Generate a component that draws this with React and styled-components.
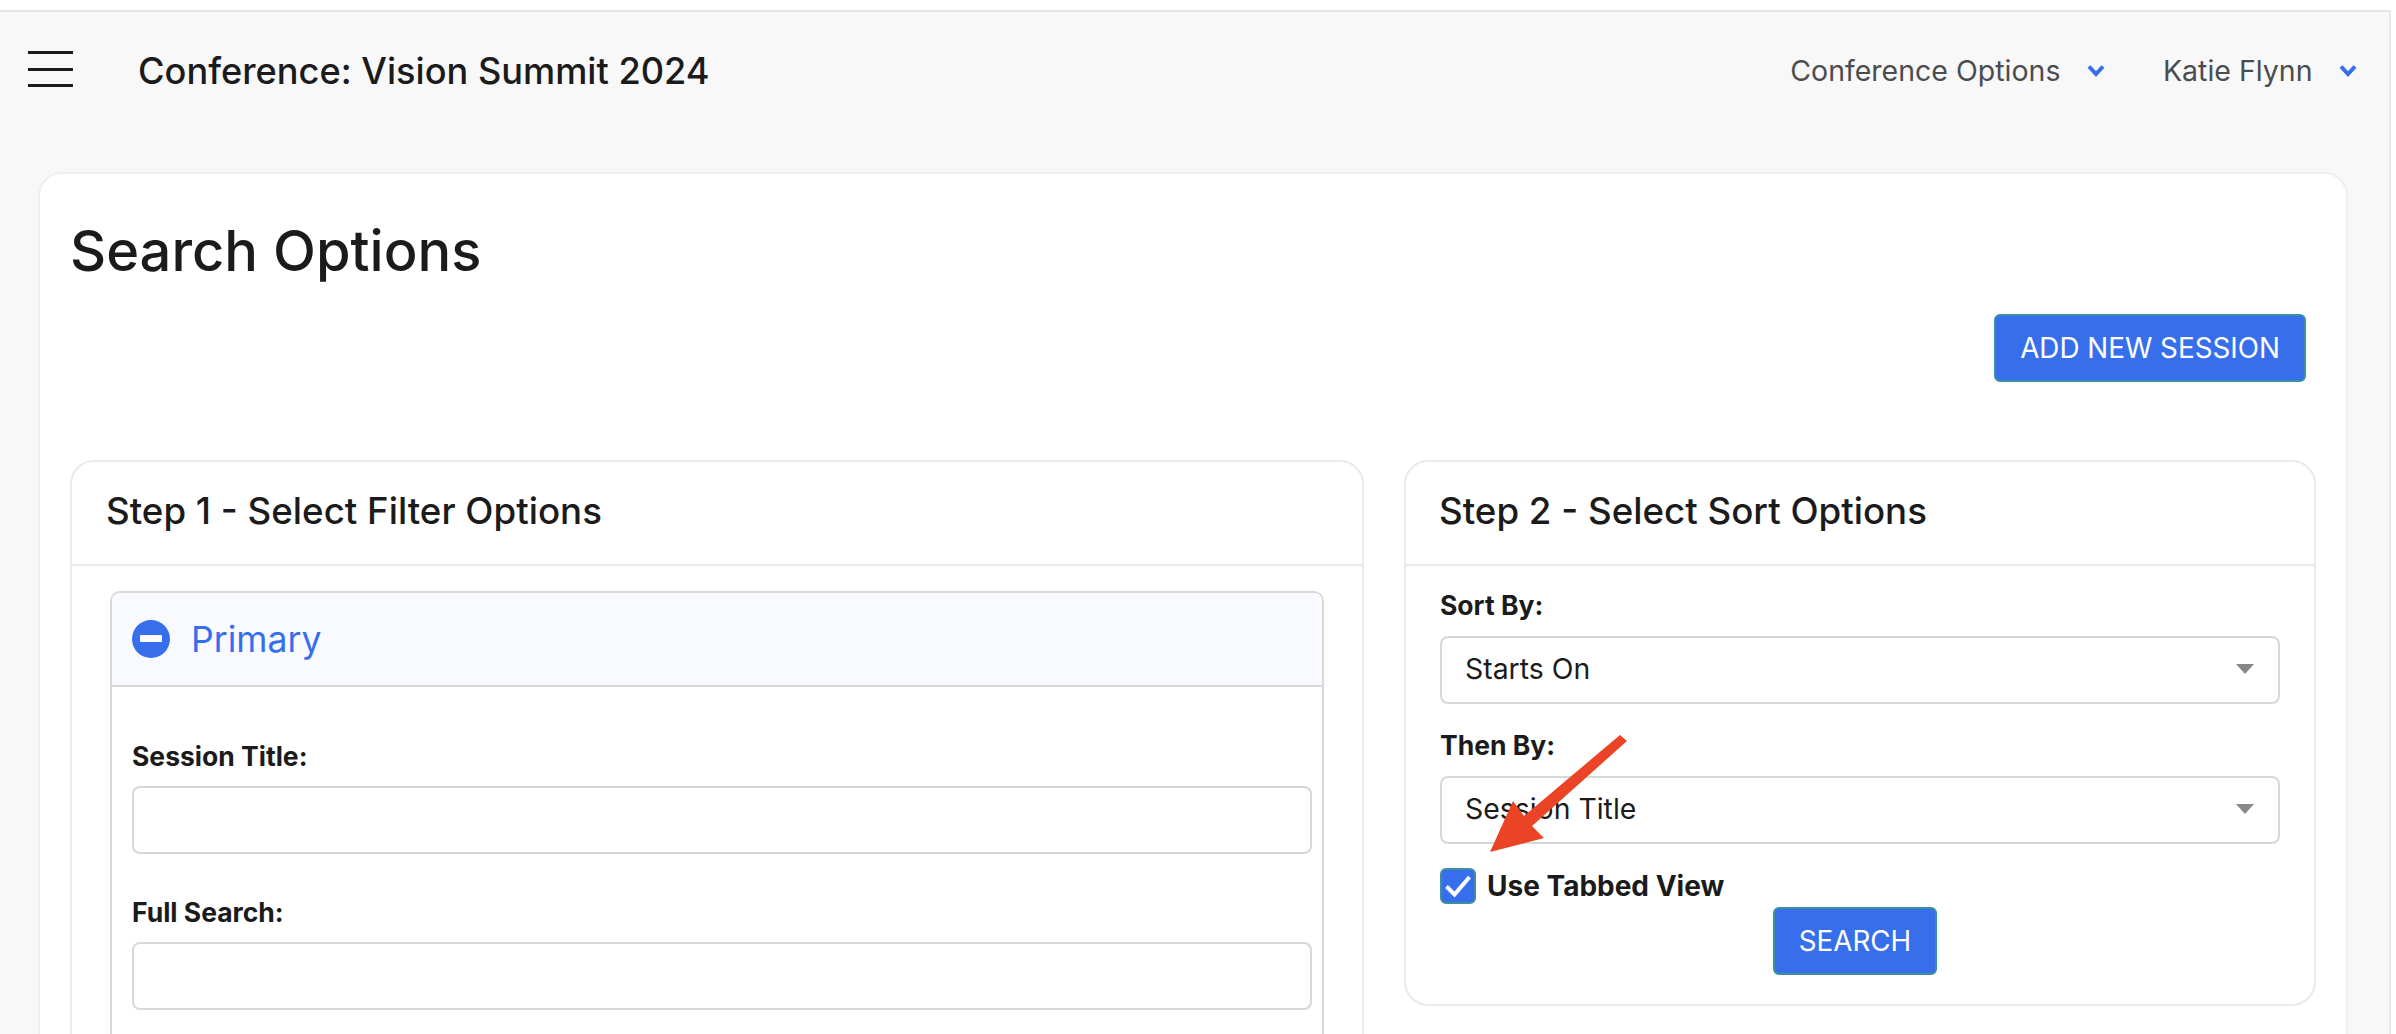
import React from "react";
import styled, { createGlobalStyle } from "styled-components";

const Global = createGlobalStyle`
  html, body { margin: 0; padding: 0; background: #fff; }
  body { font-family: Inter, "Noto Sans", sans-serif; color: #1b1b1c; overflow: hidden; }
  * { box-sizing: border-box; }
`;

const Viewport = styled.div`
  width: 2396px;
  height: 1034px;
  overflow: hidden;
  padding: 10px 5px 0 0;
  position: relative;
`;
const Main = styled.div`
  width: 2391px;
  height: 1024px;
  background: #f8f8f8;
  border-top: 2px solid #e5e5e5;
  border-right: 2px solid #e8e8e8;
  overflow: hidden;
`;
const TopBar = styled.header`
  height: 160px;
  display: flex;
  align-items: flex-start;
  padding: 39px 32px 0 28px;
`;
const MenuButton = styled.div`
  width: 45px;
  height: 36px;
  display: flex;
  flex-direction: column;
  justify-content: space-between;
  span { display: block; height: 3px; background: #1b1b1c; }
`;
const ConferenceTitle = styled.h2`
  margin: -2px 0 0 65px;
  font-size: 36.2px;
  line-height: 44px;
  font-weight: 500;
  flex: 1;
`;
const NavItem = styled.div`
  display: flex;
  align-items: center;
  height: 34px;
  margin-top: 2px;
  margin-left: ${(p) => p.$gap}px;
  font-size: 28.5px;
  font-weight: 400;
  color: #4b4c50;
  svg { margin-left: ${(p) => p.$chevron}px; }
`;
const SearchCard = styled.section`
  margin: 0 41px 0 38px;
  height: 900px;
  background: #fff;
  border: 2px solid #efefef;
  border-radius: 24px;
  padding: 30px;
`;
const PageTitle = styled.h1`
  margin: 14px 0 0;
  font-size: 56px;
  line-height: 66px;
  font-weight: 500;
`;
const ActionRow = styled.div`
  display: flex;
  justify-content: flex-end;
  padding-right: 10px;
  margin-top: 30px;
`;
const PrimaryButton = styled.button`
  height: 68px;
  padding: 0 ${(p) => p.$pad}px;
  margin-right: ${(p) => p.$shift || 0}px;
  background: #376eeb;
  border: 2px solid #3d919f;
  border-radius: 6px;
  color: #fff;
  font-family: inherit;
  font-size: 27.8px;
  text-transform: uppercase;
`;
const Columns = styled.div`
  display: grid;
  grid-template-columns: 1294px 1fr;
  column-gap: 40px;
  align-items: start;
  margin-top: 78px;
`;
const StepCard = styled.div`
  border: 2px solid #e9e9ee;
  border-radius: 24px;
  background: #fff;
`;
const StepHeader = styled.div`
  height: 104px;
  border-bottom: 2px solid #e9e9ee;
  padding: 0 34px 5px ${(p) => p.$left}px;
  display: flex;
  align-items: center;
  font-size: 36.7px;
  font-weight: 500;
`;
const FilterBody = styled.div`
  padding: 25px 38px 0;
`;
const Panel = styled.div`
  border: 2px solid #d8d8d8;
  border-radius: 10px;
  overflow: hidden;
`;
const PanelHeader = styled.div`
  height: 94px;
  background: #f9faff;
  border-bottom: 2px solid #d8d8d8;
  padding: 0 20px;
  display: flex;
  align-items: center;
  gap: 21px;
  color: #376eeb;
  font-size: 35.6px;
`;
const PanelBody = styled.div`
  padding: 52px 10px 40px 20px;
`;
const SortBody = styled.div`
  padding: 22px 34px 29px 34px;
`;
const Label = styled.label`
  display: block;
  font-size: 26.5px;
  line-height: 34px;
  font-weight: 700;
  margin-bottom: ${(p) => p.$after}px;
`;
const TextInput = styled.input`
  display: block;
  width: 100%;
  height: 68px;
  border: 2px solid #d8d8d8;
  border-radius: 8px;
  background: #fff;
  margin-bottom: 41px;
`;
const SelectWrap = styled.div`
  position: relative;
  height: 68px;
  margin-bottom: ${(p) => p.$after}px;
  &::after {
    content: "";
    position: absolute;
    right: 26px;
    top: 28px;
    border-left: 9px solid transparent;
    border-right: 9px solid transparent;
    border-top: 10px solid #888;
  }
`;
const Select = styled.select`
  appearance: none;
  width: 100%;
  height: 100%;
  border: 2px solid #d8d8d8;
  border-radius: 8px;
  background: #fff;
  padding: 0 24px 4px 23px;
  font-family: inherit;
  font-size: 28.4px;
  color: #1b1b1c;
`;
const CheckRow = styled.div`
  display: flex;
  align-items: center;
  gap: 11px;
  margin-top: 24px;
  font-size: 28px;
  font-weight: 700;
`;
const CheckBox = styled.span`
  width: 36px;
  height: 36px;
  border-radius: 6px;
  background: #376eeb;
  border: 2px solid #3d919f;
  display: flex;
  align-items: center;
  justify-content: center;
`;
const CenterRow = styled.div`
  display: flex;
  justify-content: center;
  margin-top: 3px;
`;
const Annotation = styled.svg`
  position: absolute;
  left: 0;
  top: 0;
  width: 2396px;
  height: 1034px;
  pointer-events: none;
`;

const Chevron = () => (
  <svg width="18" height="13" viewBox="0 0 18 13" fill="none">
    <path d="M2 2.5 L9 10 L16 2.5" stroke="#376eeb" strokeWidth="4" />
  </svg>
);

export default function App() {
  return (
    <Viewport>
      <Global />
      <Main>
        <TopBar>
          <MenuButton><span /><span /><span /></MenuButton>
          <ConferenceTitle>Conference: Vision Summit 2024</ConferenceTitle>
          <NavItem $gap={0} $chevron={26.5}>Conference Options<Chevron /></NavItem>
          <NavItem $gap={58} $chevron={26.5}>Katie Flynn<Chevron /></NavItem>
        </TopBar>
        <SearchCard>
          <PageTitle>Search Options</PageTitle>
          <ActionRow><PrimaryButton $pad={24}>Add new session</PrimaryButton></ActionRow>
          <Columns>
            <StepCard>
              <StepHeader $left={34}>Step 1 - Select Filter Options</StepHeader>
              <FilterBody>
                <Panel>
                  <PanelHeader>
                    <svg width="38" height="38" viewBox="0 0 38 38">
                      <circle cx="19" cy="19" r="19" fill="#376eeb" />
                      <rect x="8" y="15" width="22" height="7" rx="1" fill="#fff" />
                    </svg>
                    Primary
                  </PanelHeader>
                  <PanelBody>
                    <Label $after={13}>Session Title:</Label>
                    <TextInput />
                    <Label $after={13}>Full Search:</Label>
                    <TextInput />
                  </PanelBody>
                </Panel>
              </FilterBody>
            </StepCard>
            <StepCard>
              <StepHeader $left={33}>Step 2 - Select Sort Options</StepHeader>
              <SortBody>
                <Label $after={14}>Sort By:</Label>
                <SelectWrap $after={24}>
                  <Select defaultValue="a"><option value="a">Starts On</option></Select>
                </SelectWrap>
                <Label $after={14}>Then By:</Label>
                <SelectWrap $after={0}>
                  <Select defaultValue="a"><option value="a">Session Title</option></Select>
                </SelectWrap>
                <CheckRow>
                  <CheckBox>
                    <svg width="28" height="24" viewBox="0 0 28 24" fill="none">
                      <path d="M2.5 12.5 L10.5 20.5 L25.5 3" stroke="#fff" strokeWidth="4" />
                    </svg>
                  </CheckBox>
                  Use Tabbed View
                </CheckRow>
                <CenterRow><PrimaryButton $pad={24} $shift={10}>Search</PrimaryButton></CenterRow>
              </SortBody>
            </StepCard>
          </Columns>
        </SearchCard>
      </Main>
      <Annotation viewBox="0 0 2396 1034">
        <polygon points="1620,735 1627,741 1532,826 1544,838 1490,852 1513,801 1524,816" fill="#ea4326" />
      </Annotation>
    </Viewport>
  );
}
